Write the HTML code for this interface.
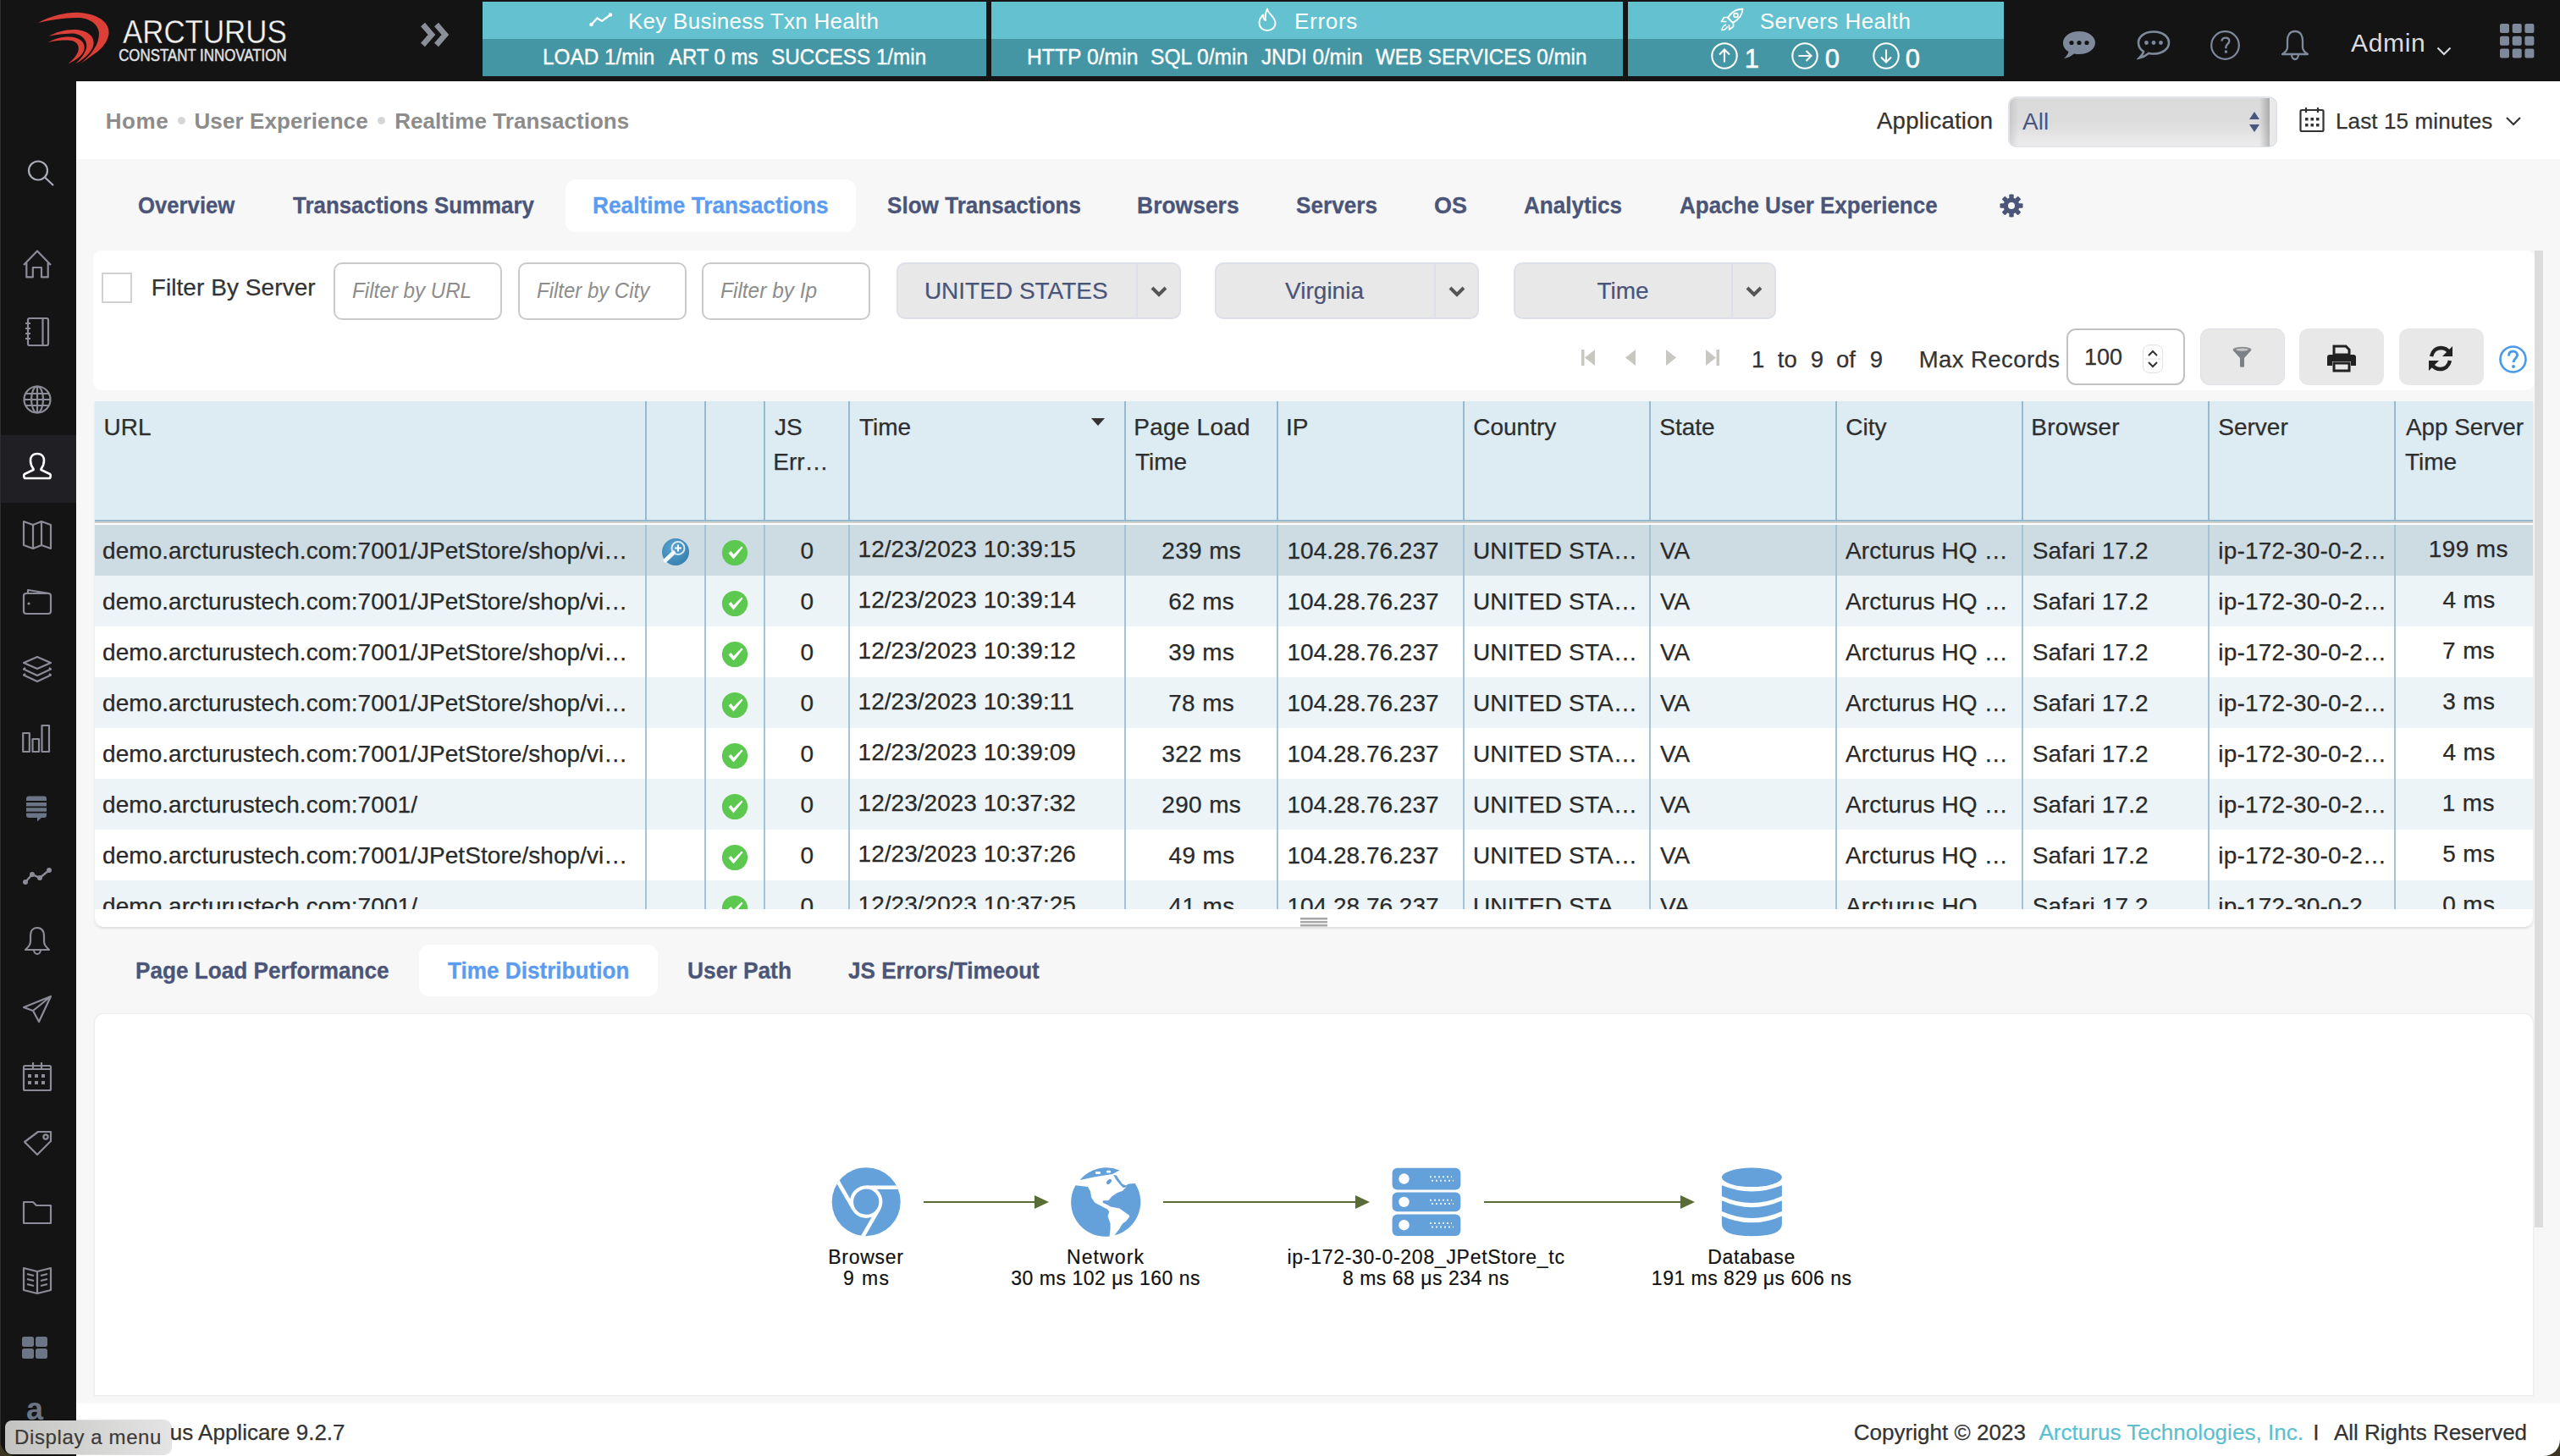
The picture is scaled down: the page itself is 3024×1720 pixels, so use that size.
<!DOCTYPE html><html><head><meta charset="utf-8"><style>
html,body{margin:0;padding:0;}
body{width:3024px;height:1720px;position:relative;overflow:hidden;background:#f7f7f7;font-family:"Liberation Sans", sans-serif;}
.t{position:absolute;white-space:nowrap;}
.r{position:absolute;}
</style></head><body>
<div class="r" style="left:0px;top:0px;width:3024px;height:96px;background:#141414"></div>
<div class="r" style="left:0px;top:96px;width:90px;height:1624px;background:#141414"></div>
<div class="r" style="left:0px;top:0px;width:1px;height:1720px;background:#2e2e2e"></div>
<div class="r" style="left:90px;top:96px;width:2934px;height:92px;background:#ffffff"></div>
<div class="r" style="left:90px;top:1658px;width:2934px;height:62px;background:#ffffff"></div>
<svg class="r" style="left:0px;top:0px;" width="140" height="90" viewBox="0 0 140 90">
<path d="M45 27 C 62 18, 80 14, 95 15 C 118 17, 130 28, 128.5 40 C 127 50, 120 58, 111 64 C 105 68, 100 72, 95 75 C 101 70, 107 65, 111 58 C 115 52, 117 46, 117 39 C 116 28, 105 20.5, 90 21 C 75 21.5, 60 23, 45 27 Z" fill="#dc3f38"/>
<path d="M57 43 C 66 38, 76 35, 87 35 C 102 35, 111 42, 110.7 51 C 110 60, 102 68, 89 75.5 C 96 69, 101.5 62, 102.3 55 C 102.8 46, 95 39.5, 85 39.5 C 74 40, 64 41, 57 43 Z" fill="#dc3f38"/>
<path d="M57 50 C 64 46, 72 43.5, 81 43.5 C 93 43.5, 100 49, 99.7 56.5 C 99.5 64, 92 70, 80.4 75.4 C 87 70, 92.5 64, 92.8 57.5 C 93 50.5, 87 47.5, 80 47.5 C 72 47.5, 64 48, 57 50 Z" fill="#dc3f38"/>
</svg>
<div class="t" style="left:145.00px;top:18.54px;font-size:38px;line-height:38px;color:#f2f2f2;font-weight:normal;font-style:normal;letter-spacing:0.000px;transform:scaleX(0.9176);transform-origin:0.00px 0;-webkit-text-stroke:0.35px #141414;">ARCTURUS</div>
<div class="t" style="left:140.00px;top:55.71px;font-size:19.5px;line-height:19.5px;color:#e2e2e2;font-weight:normal;font-style:normal;letter-spacing:0.000px;-webkit-text-stroke:0.45px #e2e2e2;transform:scaleX(0.8653);transform-origin:1.00px 0;">CONSTANT INNOVATION</div>
<svg class="r" style="left:496px;top:26px;" width="38" height="30" viewBox="0 0 38 30"><path d="M3.5 3 L14 15 L3.5 27" stroke="#8a8f9a" stroke-width="6.5" fill="none"/><path d="M19.5 3 L30 15 L19.5 27" stroke="#8a8f9a" stroke-width="6.5" fill="none"/></svg>
<div class="r" style="left:570px;top:2px;width:595px;height:44px;background:#63c1d0"></div>
<div class="r" style="left:570px;top:46px;width:595px;height:44px;background:#4596a4"></div>
<div class="r" style="left:1171px;top:2px;width:746px;height:44px;background:#63c1d0"></div>
<div class="r" style="left:1171px;top:46px;width:746px;height:44px;background:#4596a4"></div>
<div class="r" style="left:1923px;top:2px;width:444px;height:44px;background:#63c1d0"></div>
<div class="r" style="left:1923px;top:46px;width:444px;height:44px;background:#4596a4"></div>
<div class="t" style="left:742.00px;top:12.45px;font-size:26px;line-height:26px;color:#ffffff;font-weight:normal;font-style:normal;letter-spacing:0.273px;">Key Business Txn Health</div>
<div class="t" style="left:1529.00px;top:12.45px;font-size:26px;line-height:26px;color:#ffffff;font-weight:normal;font-style:normal;letter-spacing:0.700px;">Errors</div>
<div class="t" style="left:2078.75px;top:12.45px;font-size:26px;line-height:26px;color:#ffffff;font-weight:normal;font-style:normal;letter-spacing:0.481px;">Servers Health</div>
<div class="t" style="left:640.50px;top:55.06px;font-size:25px;line-height:25px;color:#ffffff;font-weight:normal;font-style:normal;letter-spacing:0.000px;-webkit-text-stroke:0.35px #ffffff;transform:scaleX(0.9716);transform-origin:2.00px 0;">LOAD 1/min</div>
<div class="t" style="left:789.50px;top:55.06px;font-size:25px;line-height:25px;color:#ffffff;font-weight:normal;font-style:normal;letter-spacing:0.000px;-webkit-text-stroke:0.35px #ffffff;transform:scaleX(0.9565);transform-origin:0.00px 0;">ART 0 ms</div>
<div class="t" style="left:911.25px;top:55.06px;font-size:25px;line-height:25px;color:#ffffff;font-weight:normal;font-style:normal;letter-spacing:0.000px;-webkit-text-stroke:0.35px #ffffff;transform:scaleX(0.9690);transform-origin:1.25px 0;">SUCCESS 1/min</div>
<div class="t" style="left:1213.00px;top:55.06px;font-size:25px;line-height:25px;color:#ffffff;font-weight:normal;font-style:normal;letter-spacing:0.000px;-webkit-text-stroke:0.35px #ffffff;transform:scaleX(0.9884);transform-origin:2.00px 0;">HTTP 0/min</div>
<div class="t" style="left:1358.75px;top:55.06px;font-size:25px;line-height:25px;color:#ffffff;font-weight:normal;font-style:normal;letter-spacing:0.000px;-webkit-text-stroke:0.35px #ffffff;transform:scaleX(0.9825);transform-origin:1.25px 0;">SQL 0/min</div>
<div class="t" style="left:1489.75px;top:55.06px;font-size:25px;line-height:25px;color:#ffffff;font-weight:normal;font-style:normal;letter-spacing:0.000px;-webkit-text-stroke:0.35px #ffffff;transform:scaleX(0.9671);transform-origin:0.25px 0;">JNDI 0/min</div>
<div class="t" style="left:1625.00px;top:55.06px;font-size:25px;line-height:25px;color:#ffffff;font-weight:normal;font-style:normal;letter-spacing:0.000px;-webkit-text-stroke:0.35px #ffffff;transform:scaleX(0.9668);transform-origin:0.00px 0;">WEB SERVICES 0/min</div>
<svg class="r" style="left:694px;top:13px" width="32" height="20" viewBox="0 0 32 20"><path d="M4.5 16 L11.5 8.5 L17 12 L27 4.5" stroke="#fff" stroke-width="2.2" fill="none"/><circle cx="4.5" cy="16" r="2.3" fill="#fff"/><circle cx="27" cy="4.5" r="2.3" fill="#fff"/></svg>
<svg class="r" style="left:1483px;top:8px" width="28" height="30" viewBox="0 0 28 30"><path d="M14 2.5 C 14.5 8, 23.5 12, 23.5 19 C 23.5 24.5, 19.5 28, 14 28 C 8.5 28, 4.5 24.5, 4.5 19 C 4.5 15, 6.5 12, 9 9.5 C 9 13.5, 10.5 15.5, 12 16 C 11 10, 12.5 5.5, 14 2.5 Z" stroke="#fff" stroke-width="1.9" fill="none" stroke-linejoin="round"/></svg>
<svg class="r" style="left:2031px;top:8px" width="30" height="30" viewBox="0 0 30 30"><path d="M27.5 2.5 C 20 2.5, 14 6.5, 10 13 L 16 19 C 22.5 15, 27.5 9, 27.5 2.5 Z" stroke="#fff" stroke-width="1.9" fill="none" stroke-linejoin="round"/><circle cx="19.5" cy="10" r="2.4" stroke="#fff" stroke-width="1.7" fill="none"/><path d="M10.5 12.5 L5.5 12.5 L2.5 17.5 L8.5 17.5 M16.5 18.5 L16.5 23.5 L11.5 27 L11.5 21" stroke="#fff" stroke-width="1.7" fill="none" stroke-linejoin="round"/><path d="M8 21 C 5 22, 3 25, 3 27.5 C 5.5 27.5, 8.5 26, 9.5 23" stroke="#fff" stroke-width="1.6" fill="none"/></svg>
<svg class="r" style="left:2020.5px;top:50px;" width="32" height="32" viewBox="0 0 32 32"><circle cx="16" cy="16" r="14.7" stroke="#fff" stroke-width="2.1" fill="none"/><path d="M16 23.5 L16 8.5 M10 14.5 L16 8.5 L22 14.5" stroke="#fff" stroke-width="2.1" fill="none"/></svg>
<svg class="r" style="left:2115.5px;top:50px;" width="32" height="32" viewBox="0 0 32 32"><circle cx="16" cy="16" r="14.7" stroke="#fff" stroke-width="2.1" fill="none"/><path d="M8.5 16 L23.5 16 M17.5 10 L23.5 16 L17.5 22" stroke="#fff" stroke-width="2.1" fill="none"/></svg>
<svg class="r" style="left:2211.5px;top:50px;" width="32" height="32" viewBox="0 0 32 32"><circle cx="16" cy="16" r="14.7" stroke="#fff" stroke-width="2.1" fill="none"/><path d="M16 8.5 L16 23.5 M10 17.5 L16 23.5 L22 17.5" stroke="#fff" stroke-width="2.1" fill="none"/></svg>
<div class="t" style="left:2060.75px;top:53.86px;font-size:31px;line-height:31px;color:#ffffff;font-weight:normal;font-style:normal;letter-spacing:0.000px;-webkit-text-stroke:0.5px #ffffff;">1</div>
<div class="t" style="left:2155.75px;top:53.86px;font-size:31px;line-height:31px;color:#ffffff;font-weight:normal;font-style:normal;letter-spacing:0.000px;-webkit-text-stroke:0.5px #ffffff;">0</div>
<div class="t" style="left:2250.75px;top:53.86px;font-size:31px;line-height:31px;color:#ffffff;font-weight:normal;font-style:normal;letter-spacing:0.000px;-webkit-text-stroke:0.5px #ffffff;">0</div>
<svg class="r" style="left:2436px;top:35px;" width="40" height="36" viewBox="0 0 40 36"><path d="M20 2 C 31 2, 39 8, 39 15.5 C 39 23, 31 29, 20 29 C 18 29, 16 28.8, 14 28.4 C 11 31, 7 33, 2 34 C 5 31, 7 29, 7.5 26 C 3 23.5, 1 20, 1 15.5 C 1 8, 9 2, 20 2 Z" fill="#7e899c"/><circle cx="11" cy="15.5" r="2.6" fill="#141414"/><circle cx="20" cy="15.5" r="2.6" fill="#141414"/><circle cx="29" cy="15.5" r="2.6" fill="#141414"/></svg>
<svg class="r" style="left:2524px;top:35px;" width="40" height="36" viewBox="0 0 40 36"><path d="M20 2.5 C 31 2.5, 38 8.5, 38 15.5 C 38 22.5, 31 28.5, 20 28.5 C 18 28.5, 16 28.3, 14 27.9 C 11 30.5, 7.5 32.5, 3 33.5 C 6 30.5, 7.5 28.5, 8 25.8 C 4 23.3, 2 19.8, 2 15.5 C 2 8.5, 9 2.5, 20 2.5 Z" fill="none" stroke="#7e899c" stroke-width="2.6"/><circle cx="11.5" cy="15.5" r="2.4" fill="#7e899c"/><circle cx="20" cy="15.5" r="2.4" fill="#7e899c"/><circle cx="28.5" cy="15.5" r="2.4" fill="#7e899c"/></svg>
<svg class="r" style="left:2610px;top:35px;" width="37" height="37" viewBox="0 0 37 37"><circle cx="18.5" cy="18.5" r="16.3" fill="none" stroke="#7e899c" stroke-width="2.2"/><path d="M14.5 13.6 C 14.5 11, 16.5 9.6, 19 9.6 C 21.7 9.6, 23.3 11.3, 23.3 13.4 C 23.3 16.5, 19.4 17.3, 19.4 20.6 L 19.4 22.3" fill="none" stroke="#7e899c" stroke-width="2.4"/><rect x="17.9" y="24.6" width="3" height="3" fill="#7e899c"/></svg>
<svg class="r" style="left:2694px;top:35px;" width="34" height="37" viewBox="0 0 34 37"><path d="M17 2 C 10 2, 8 8, 8 13 L 8 21 C 8 24, 5 27, 2 29 L 32 29 C 29 27, 26 24, 26 21 L 26 13 C 26 8, 24 2, 17 2 Z" fill="none" stroke="#7e899c" stroke-width="2.3" stroke-linejoin="round"/><path d="M13 29 C 13 33, 15 35, 17 35 C 19 35, 21 33, 21 29" fill="none" stroke="#7e899c" stroke-width="2.3"/></svg>
<div class="t" style="left:2777.00px;top:36.48px;font-size:30px;line-height:30px;color:#d9dde2;font-weight:normal;font-style:normal;letter-spacing:0.688px;">Admin</div>
<svg class="r" style="left:2877px;top:53px;" width="20" height="14" viewBox="0 0 20 14"><path d="M2.5 3.5 L10 11 L17.5 3.5" fill="none" stroke="#d9dde2" stroke-width="2"/></svg>
<svg class="r" style="left:2953px;top:28px;" width="41" height="41" viewBox="0 0 41 41"><rect x="0.0" y="0.0" width="11" height="11" rx="2" fill="#7e899c"/><rect x="14.7" y="0.0" width="11" height="11" rx="2" fill="#7e899c"/><rect x="29.4" y="0.0" width="11" height="11" rx="2" fill="#7e899c"/><rect x="0.0" y="14.7" width="11" height="11" rx="2" fill="#7e899c"/><rect x="14.7" y="14.7" width="11" height="11" rx="2" fill="#7e899c"/><rect x="29.4" y="14.7" width="11" height="11" rx="2" fill="#7e899c"/><rect x="0.0" y="29.4" width="11" height="11" rx="2" fill="#7e899c"/><rect x="14.7" y="29.4" width="11" height="11" rx="2" fill="#7e899c"/><rect x="29.4" y="29.4" width="11" height="11" rx="2" fill="#7e899c"/></svg>
<div class="r" style="left:1px;top:514px;width:89px;height:80px;background:#1f1f24"></div>
<svg class="r" style="left:30px;top:187px;" width="36" height="36" viewBox="0 0 36 36"><circle cx="15" cy="14.5" r="11" stroke="#a9adb8" stroke-width="2.2" fill="none" stroke-linejoin="round"/><path d="M23 22.5 L33 32" stroke="#a9adb8" stroke-width="2.2" fill="none" stroke-linejoin="round"/></svg>
<svg class="r" style="left:24.0px;top:292.0px;" width="40" height="40" viewBox="0 0 40 40"><path d="M4 21 L20 4.5 L36 21 M7.3 18 L7.3 35.4 L14.8 35.4 L14.8 24 L25 24 L25 35.4 L32.7 35.4 L32.7 18" stroke="#8c8c98" stroke-width="2.2" fill="none" stroke-linejoin="round"/></svg>
<svg class="r" style="left:24.0px;top:372.0px;" width="40" height="40" viewBox="0 0 40 40"><rect x="9" y="4" width="24" height="32" rx="2" stroke="#8c8c98" stroke-width="2.2" fill="none" stroke-linejoin="round"/><path d="M26.5 4 L26.5 36 M6 10 L12 10 M6 16 L12 16 M6 22 L12 22 M6 28 L12 28" stroke="#8c8c98" stroke-width="2.2" fill="none" stroke-linejoin="round"/></svg>
<svg class="r" style="left:24.0px;top:452.0px;" width="40" height="40" viewBox="0 0 40 40"><circle cx="20" cy="20" r="15.5" stroke="#8c8c98" stroke-width="2.2" fill="none" stroke-linejoin="round"/><ellipse cx="20" cy="20" rx="7" ry="15.5" stroke="#8c8c98" stroke-width="2.2" fill="none" stroke-linejoin="round"/><path d="M20 4.5 L20 35.5 M4.5 20 L35.5 20 M6.5 13 L33.5 13 M6.5 27 L33.5 27" stroke="#8c8c98" stroke-width="2.2" fill="none" stroke-linejoin="round"/></svg>
<svg class="r" style="left:24.0px;top:532.0px;" width="40" height="40" viewBox="0 0 40 40"><path d="M20 4 C 14 4, 12 8, 12 12 C 12 17, 14 20, 15.5 22 L 15.5 23 L 5 28 C 4 29, 4 31, 5 33 L 35 33 C 36 31, 36 29, 35 28 L 24.5 23 L 24.5 22 C 26 20, 28 17, 28 12 C 28 8, 26 4, 20 4 Z" stroke="#ffffff" stroke-width="2.6" fill="none" stroke-linejoin="round"/></svg>
<svg class="r" style="left:24.0px;top:612.0px;" width="40" height="40" viewBox="0 0 40 40"><path d="M4 4 L15 8 L25 4 L36 8 L36 36 L25 32 L15 36 L4 32 Z M15 8 L15 36 M25 4 L25 32" stroke="#8c8c98" stroke-width="2.2" fill="none" stroke-linejoin="round"/></svg>
<svg class="r" style="left:24.0px;top:692.0px;" width="40" height="40" viewBox="0 0 40 40"><path d="M9 10 L9 5 L34 9" stroke="#8c8c98" stroke-width="2.2" fill="none" stroke-linejoin="round"/><rect x="4" y="9" width="32" height="24" rx="3" stroke="#8c8c98" stroke-width="2.2" fill="none" stroke-linejoin="round"/><circle cx="10" cy="21" r="1.6" fill="#8c8c98"/></svg>
<svg class="r" style="left:24.0px;top:772.0px;" width="40" height="40" viewBox="0 0 40 40"><path d="M4 11 L20 4 L36 11 L20 18 Z" stroke="#8c8c98" stroke-width="2.2" fill="none" stroke-linejoin="round"/><path d="M6 17 L4 18.5 L20 26 L36 18.5 L34 17" stroke="#8c8c98" stroke-width="2.2" fill="none" stroke-linejoin="round"/><path d="M6 24 L4 25.5 L20 33 L36 25.5 L34 24" stroke="#8c8c98" stroke-width="2.2" fill="none" stroke-linejoin="round"/></svg>
<svg class="r" style="left:24.0px;top:852.0px;" width="40" height="40" viewBox="0 0 40 40"><rect x="3.2" y="14" width="7.6" height="22" stroke="#8c8c98" stroke-width="2.2" fill="none" stroke-linejoin="round"/><rect x="14.5" y="21" width="7.5" height="15" stroke="#8c8c98" stroke-width="2.2" fill="none" stroke-linejoin="round"/><rect x="25.5" y="5" width="8.5" height="31" stroke="#8c8c98" stroke-width="2.2" fill="none" stroke-linejoin="round"/></svg>
<svg class="r" style="left:22.0px;top:932.0px;" width="40" height="40" viewBox="0 0 40 40"><path d="M12 8.5 L30 8.5 C 32 8.5, 33 9.5, 33 11.5 L 33 31 C 33 33, 32 34, 30 34 L 27 34 L 22 38.5 L 22 34 L 12 34 C 10 34, 9 33, 9 31 L 9 11.5 C 9 9.5, 10 8.5, 12 8.5 Z" fill="#6b7585"/><path d="M9 15 L33 15 M9 21.3 L33 21.3 M9 27.6 L33 27.6" stroke="#141414" stroke-width="1.8"/></svg>
<svg class="r" style="left:24.0px;top:1012.0px;" width="40" height="40" viewBox="0 0 40 40"><path d="M6 30 L14 21 L23 25 L34 16" stroke="#8c8c98" stroke-width="2.4" fill="none"/><circle cx="6" cy="30" r="3" fill="#8c8c98"/><circle cx="14" cy="21" r="3" fill="#8c8c98"/><circle cx="23" cy="25" r="3" fill="#8c8c98"/><circle cx="34" cy="16" r="3" fill="#8c8c98"/></svg>
<svg class="r" style="left:24.0px;top:1092.0px;" width="40" height="40" viewBox="0 0 40 40"><path d="M20 4 C 14 4, 12 9, 12 13 L 12 20 C 12 24, 10 26, 6 30 L 34 30 C 30 26, 28 24, 28 20 L 28 13 C 28 9, 26 4, 20 4 Z" stroke="#8c8c98" stroke-width="2.2" fill="none" stroke-linejoin="round"/><path d="M16 30 C 16 33, 18 35, 20 35 C 22 35, 24 33, 24 30" stroke="#8c8c98" stroke-width="2.2" fill="none" stroke-linejoin="round"/></svg>
<svg class="r" style="left:24.0px;top:1172.0px;" width="40" height="40" viewBox="0 0 40 40"><path d="M4 18 L36 5 L22 35 L15 22 Z M15 22 L36 5" stroke="#8c8c98" stroke-width="2.2" fill="none" stroke-linejoin="round"/></svg>
<svg class="r" style="left:24.0px;top:1252.0px;" width="40" height="40" viewBox="0 0 40 40"><rect x="4" y="7" width="32" height="29" rx="1.5" stroke="#8c8c98" stroke-width="2.2" fill="none" stroke-linejoin="round"/><path d="M15 3 L15 10 M25 3 L25 10 M4 11 L36 11" stroke="#8c8c98" stroke-width="2.2" fill="none" stroke-linejoin="round"/><rect x="9" y="17" width="4" height="4" fill="#8c8c98"/><rect x="9" y="25" width="4" height="4" fill="#8c8c98"/><rect x="17" y="17" width="4" height="4" fill="#8c8c98"/><rect x="17" y="25" width="4" height="4" fill="#8c8c98"/><rect x="25" y="17" width="4" height="4" fill="#8c8c98"/><rect x="25" y="25" width="4" height="4" fill="#8c8c98"/></svg>
<svg class="r" style="left:24.0px;top:1332.0px;" width="40" height="40" viewBox="0 0 40 40"><path d="M30 5 L36 5 L36 16 L20 32 L5 17 L21 5 Z" stroke="#8c8c98" stroke-width="2.2" fill="none" stroke-linejoin="round"/><circle cx="30" cy="11" r="2.6" stroke="#8c8c98" stroke-width="2.2" fill="none" stroke-linejoin="round"/></svg>
<svg class="r" style="left:24.0px;top:1412.0px;" width="40" height="40" viewBox="0 0 40 40"><path d="M4 8 L15 8 L19 12 L36 12 L36 33 L4 33 Z" stroke="#8c8c98" stroke-width="2.2" fill="none" stroke-linejoin="round"/></svg>
<svg class="r" style="left:24.0px;top:1492.0px;" width="40" height="40" viewBox="0 0 40 40"><path d="M4 6 L20 10 L36 6 L36 32 L20 36 L4 32 Z M20 10 L20 36 M8 13 L16 15 M8 19 L16 21 M8 25 L16 27 M24 15 L32 13 M24 21 L32 19 M24 27 L32 25" stroke="#8c8c98" stroke-width="2.2" fill="none" stroke-linejoin="round"/></svg>
<svg class="r" style="left:22.0px;top:1572.0px;" width="40" height="40" viewBox="0 0 40 40"><rect x="4" y="7" width="14" height="12" rx="2.5" fill="#6b7585"/><rect x="4" y="21" width="14" height="12" rx="2.5" fill="#6b7585"/><rect x="20" y="7" width="14" height="12" rx="2.5" fill="#6b7585"/><rect x="20" y="21" width="14" height="12" rx="2.5" fill="#6b7585"/></svg>
<div class="t" style="left:31.00px;top:1647.27px;font-size:36px;line-height:36px;color:#6b7585;font-weight:bold;font-style:normal;letter-spacing:0.000px;">a</div>
<div class="t" style="left:124.75px;top:129.94px;font-size:26px;line-height:26px;color:#8c8c8c;font-weight:bold;font-style:normal;letter-spacing:0.533px;">Home</div>
<div class="r" style="left:210px;top:138px;width:9px;height:9px;background:#d6d6d6;border-radius:50%"></div>
<div class="t" style="left:229.50px;top:129.94px;font-size:26px;line-height:26px;color:#8c8c8c;font-weight:bold;font-style:normal;letter-spacing:0.096px;">User Experience</div>
<div class="r" style="left:446px;top:138px;width:9px;height:9px;background:#d6d6d6;border-radius:50%"></div>
<div class="t" style="left:466.25px;top:129.94px;font-size:26px;line-height:26px;color:#8c8c8c;font-weight:bold;font-style:normal;letter-spacing:0.050px;">Realtime Transactions</div>
<div class="t" style="left:2217.00px;top:128.77px;font-size:27.5px;line-height:27.5px;color:#333;font-weight:normal;font-style:normal;letter-spacing:0.250px;-webkit-text-stroke:0.25px #333;">Application</div>
<div class="r" style="left:2372px;top:114px;width:318px;height:60px;border-radius:10px;background:#e9e9e9;box-shadow:inset 0 0 0 1.5px #dde1ea;"></div>
<div class="r" style="left:2373.5px;top:115.5px;width:307.5px;height:57px;border-radius:8px 0 0 8px;background:linear-gradient(90deg,rgba(0,0,0,0.09),rgba(0,0,0,0) 10px,rgba(0,0,0,0) calc(100% - 12px),rgba(0,0,0,0.22)),linear-gradient(#dadada,#dcdcdc 50%,#ececec)"></div>
<div class="t" style="left:2389.00px;top:129.71px;font-size:28px;line-height:28px;color:#4a5580;font-weight:normal;font-style:normal;letter-spacing:0.000px;">All</div>
<svg class="r" style="left:2654px;top:130px;" width="18" height="28" viewBox="0 0 18 28"><path d="M9 2 L15 11 L3 11 Z M9 26 L15 17 L3 17 Z" fill="#4a5580"/></svg>
<svg class="r" style="left:2715px;top:125px;" width="32" height="32" viewBox="0 0 32 32"><rect x="2.5" y="5" width="27" height="25" rx="1.5" fill="none" stroke="#333" stroke-width="2.2"/><path d="M9 2 L9 8 M23 2 L23 8" stroke="#333" stroke-width="2.2"/><rect x="8" y="14" width="3.5" height="3.5" fill="#333"/><rect x="8" y="21" width="3.5" height="3.5" fill="#333"/><rect x="14.5" y="14" width="3.5" height="3.5" fill="#333"/><rect x="14.5" y="21" width="3.5" height="3.5" fill="#333"/><rect x="21" y="14" width="3.5" height="3.5" fill="#333"/><rect x="21" y="21" width="3.5" height="3.5" fill="#333"/></svg>
<div class="t" style="left:2759.00px;top:130.44px;font-size:26px;line-height:26px;color:#333;font-weight:normal;font-style:normal;letter-spacing:0.125px;-webkit-text-stroke:0.25px #333;">Last 15 minutes</div>
<svg class="r" style="left:2958px;top:136px;" width="22" height="14" viewBox="0 0 22 14"><path d="M3 3 L11 11 L19 3" fill="none" stroke="#333" stroke-width="2.2"/></svg>
<div class="r" style="left:668px;top:212px;width:343px;height:62px;background:#fff;border-radius:12px"></div>
<div class="t" style="left:163.00px;top:230.33px;font-size:27px;line-height:27px;color:#4a5578;font-weight:bold;font-style:normal;letter-spacing:0.000px;-webkit-text-stroke:0.3px #4a5578;transform:scaleX(0.9516);transform-origin:1.00px 0;">Overview</div>
<div class="t" style="left:346.35px;top:230.33px;font-size:27px;line-height:27px;color:#4a5578;font-weight:bold;font-style:normal;letter-spacing:0.000px;-webkit-text-stroke:0.3px #4a5578;transform:scaleX(0.9592);transform-origin:0.25px 0;">Transactions Summary</div>
<div class="t" style="left:1048.25px;top:230.33px;font-size:27px;line-height:27px;color:#4a5578;font-weight:bold;font-style:normal;letter-spacing:0.000px;-webkit-text-stroke:0.3px #4a5578;transform:scaleX(0.9660);transform-origin:0.75px 0;">Slow Transactions</div>
<div class="t" style="left:1343.25px;top:230.33px;font-size:27px;line-height:27px;color:#4a5578;font-weight:bold;font-style:normal;letter-spacing:0.000px;-webkit-text-stroke:0.3px #4a5578;transform:scaleX(0.9800);transform-origin:1.75px 0;">Browsers</div>
<div class="t" style="left:1531.25px;top:230.33px;font-size:27px;line-height:27px;color:#4a5578;font-weight:bold;font-style:normal;letter-spacing:0.000px;-webkit-text-stroke:0.3px #4a5578;transform:scaleX(0.9691);transform-origin:0.75px 0;">Servers</div>
<div class="t" style="left:1694.00px;top:230.33px;font-size:27px;line-height:27px;color:#4a5578;font-weight:bold;font-style:normal;letter-spacing:0.000px;-webkit-text-stroke:0.3px #4a5578;transform:scaleX(0.9986);transform-origin:1.00px 0;">OS</div>
<div class="t" style="left:1800.25px;top:230.33px;font-size:27px;line-height:27px;color:#4a5578;font-weight:bold;font-style:normal;letter-spacing:0.000px;-webkit-text-stroke:0.3px #4a5578;transform:scaleX(0.9661);transform-origin:0.75px 0;">Analytics</div>
<div class="t" style="left:1984.25px;top:230.33px;font-size:27px;line-height:27px;color:#4a5578;font-weight:bold;font-style:normal;letter-spacing:0.000px;-webkit-text-stroke:0.3px #4a5578;transform:scaleX(0.9619);transform-origin:0.75px 0;">Apache User Experience</div>
<div class="t" style="left:700.25px;top:230.33px;font-size:27px;line-height:27px;color:#5b9cf0;font-weight:bold;font-style:normal;letter-spacing:0.000px;-webkit-text-stroke:0.3px #5b9cf0;transform:scaleX(0.9718);transform-origin:1.75px 0;">Realtime Transactions</div>
<svg class="r" style="left:2362px;top:229px;" width="28" height="28" viewBox="0 0 28 28"><rect x="11.3" y="0.5" width="5.4" height="7" rx="1" fill="#4a5578" transform="rotate(0 14 14)"/><rect x="11.3" y="0.5" width="5.4" height="7" rx="1" fill="#4a5578" transform="rotate(45 14 14)"/><rect x="11.3" y="0.5" width="5.4" height="7" rx="1" fill="#4a5578" transform="rotate(90 14 14)"/><rect x="11.3" y="0.5" width="5.4" height="7" rx="1" fill="#4a5578" transform="rotate(135 14 14)"/><rect x="11.3" y="0.5" width="5.4" height="7" rx="1" fill="#4a5578" transform="rotate(180 14 14)"/><rect x="11.3" y="0.5" width="5.4" height="7" rx="1" fill="#4a5578" transform="rotate(225 14 14)"/><rect x="11.3" y="0.5" width="5.4" height="7" rx="1" fill="#4a5578" transform="rotate(270 14 14)"/><rect x="11.3" y="0.5" width="5.4" height="7" rx="1" fill="#4a5578" transform="rotate(315 14 14)"/><circle cx="14" cy="14" r="9.5" fill="#4a5578"/><circle cx="14" cy="14" r="4" fill="#f7f7f7"/></svg>
<div class="r" style="left:110px;top:296px;width:2884px;height:165px;background:#fff;border-radius:10px"></div>
<div class="r" style="left:2994px;top:296px;width:10px;height:1154px;background:#dcdcdc"></div>
<div class="r" style="left:120px;top:322px;width:36px;height:36px;box-sizing:border-box;border:2px solid #d2d2d2;background:#fff"></div>
<div class="t" style="left:178.75px;top:326.21px;font-size:28px;line-height:28px;color:#333;font-weight:normal;font-style:normal;letter-spacing:0.067px;-webkit-text-stroke:0.25px #333;">Filter By Server</div>
<div class="r" style="left:394px;top:310px;width:199px;height:68px;box-sizing:border-box;border:2px solid #cacaca;border-radius:10px;background:#fff"></div>
<div class="t" style="left:415.75px;top:331.06px;font-size:25px;line-height:25px;color:#8d8d8d;font-weight:normal;font-style:italic;letter-spacing:0.000px;transform:scaleX(0.9668);transform-origin:0.75px 0;">Filter by URL</div>
<div class="r" style="left:612px;top:310px;width:199px;height:68px;box-sizing:border-box;border:2px solid #cacaca;border-radius:10px;background:#fff"></div>
<div class="t" style="left:633.75px;top:331.06px;font-size:25px;line-height:25px;color:#8d8d8d;font-weight:normal;font-style:italic;letter-spacing:0.000px;transform:scaleX(0.9580);transform-origin:0.75px 0;">Filter by City</div>
<div class="r" style="left:829px;top:310px;width:199px;height:68px;box-sizing:border-box;border:2px solid #cacaca;border-radius:10px;background:#fff"></div>
<div class="t" style="left:850.75px;top:331.06px;font-size:25px;line-height:25px;color:#8d8d8d;font-weight:normal;font-style:italic;letter-spacing:0.000px;transform:scaleX(0.9783);transform-origin:0.75px 0;">Filter by Ip</div>
<div class="r" style="left:1059px;top:310px;width:336px;height:67px;box-sizing:border-box;border:2px solid #dde0e8;border-radius:10px;background:#e8e8e8"></div>
<div class="r" style="left:1342px;top:312px;width:2px;height:63px;background:#dde0e8"></div>
<div class="t" style="left:1091.88px;top:330.21px;font-size:28px;line-height:28px;color:#4a5478;font-weight:normal;font-style:normal;letter-spacing:0.000px;-webkit-text-stroke:0.2px #4a5478;">UNITED STATES</div>
<svg class="r" style="left:1358px;top:336px;" width="22" height="17" viewBox="0 0 22 17"><path d="M3 4 L11 12 L19 4" fill="none" stroke="#555" stroke-width="4"/></svg>
<div class="r" style="left:1435px;top:310px;width:312px;height:67px;box-sizing:border-box;border:2px solid #dde0e8;border-radius:10px;background:#e8e8e8"></div>
<div class="r" style="left:1694px;top:312px;width:2px;height:63px;background:#dde0e8"></div>
<div class="t" style="left:1518.12px;top:330.21px;font-size:28px;line-height:28px;color:#4a5478;font-weight:normal;font-style:normal;letter-spacing:0.000px;-webkit-text-stroke:0.2px #4a5478;">Virginia</div>
<svg class="r" style="left:1710px;top:336px;" width="22" height="17" viewBox="0 0 22 17"><path d="M3 4 L11 12 L19 4" fill="none" stroke="#555" stroke-width="4"/></svg>
<div class="r" style="left:1788px;top:310px;width:310px;height:67px;box-sizing:border-box;border:2px solid #dde0e8;border-radius:10px;background:#e8e8e8"></div>
<div class="r" style="left:2045px;top:312px;width:2px;height:63px;background:#dde0e8"></div>
<div class="t" style="left:1886.38px;top:330.21px;font-size:28px;line-height:28px;color:#4a5478;font-weight:normal;font-style:normal;letter-spacing:0.000px;-webkit-text-stroke:0.2px #4a5478;">Time</div>
<svg class="r" style="left:2061px;top:336px;" width="22" height="17" viewBox="0 0 22 17"><path d="M3 4 L11 12 L19 4" fill="none" stroke="#555" stroke-width="4"/></svg>
<svg class="r" style="left:1866px;top:412px;" width="20" height="21" viewBox="0 0 20 21"><rect x="2" y="1" width="3.5" height="19" fill="#c9c7c1"/><path d="M18 1 L6 10.5 L18 20 Z" fill="#c9c7c1"/></svg>
<svg class="r" style="left:1917px;top:412px;" width="18" height="21" viewBox="0 0 18 21"><path d="M15 1 L3 10.5 L15 20 Z" fill="#c9c7c1"/></svg>
<svg class="r" style="left:1965px;top:412px;" width="18" height="21" viewBox="0 0 18 21"><path d="M3 1 L15 10.5 L3 20 Z" fill="#c9c7c1"/></svg>
<svg class="r" style="left:2013px;top:412px;" width="20" height="21" viewBox="0 0 20 21"><rect x="14.5" y="1" width="3.5" height="19" fill="#c9c7c1"/><path d="M2 1 L14 10.5 L2 20 Z" fill="#c9c7c1"/></svg>
<div class="t" style="left:2069.00px;top:410.77px;font-size:27.5px;line-height:27.5px;color:#333;font-weight:normal;font-style:normal;letter-spacing:0.000px;-webkit-text-stroke:0.25px #333;">1</div>
<div class="t" style="left:2099.75px;top:410.77px;font-size:27.5px;line-height:27.5px;color:#333;font-weight:normal;font-style:normal;letter-spacing:0.000px;-webkit-text-stroke:0.25px #333;">to</div>
<div class="t" style="left:2138.75px;top:410.77px;font-size:27.5px;line-height:27.5px;color:#333;font-weight:normal;font-style:normal;letter-spacing:0.000px;-webkit-text-stroke:0.25px #333;">9</div>
<div class="t" style="left:2169.00px;top:410.77px;font-size:27.5px;line-height:27.5px;color:#333;font-weight:normal;font-style:normal;letter-spacing:0.000px;-webkit-text-stroke:0.25px #333;">of</div>
<div class="t" style="left:2208.75px;top:410.77px;font-size:27.5px;line-height:27.5px;color:#333;font-weight:normal;font-style:normal;letter-spacing:0.000px;-webkit-text-stroke:0.25px #333;">9</div>
<div class="t" style="left:2266.75px;top:410.77px;font-size:27.5px;line-height:27.5px;color:#333;font-weight:normal;font-style:normal;letter-spacing:0.420px;-webkit-text-stroke:0.25px #333;">Max Records</div>
<div class="r" style="left:2441px;top:388px;width:140px;height:67px;box-sizing:border-box;border:2px solid #c2c2c2;border-radius:11px;background:#fff"></div>
<div class="t" style="left:2462.00px;top:409.33px;font-size:27px;line-height:27px;color:#333;font-weight:normal;font-style:normal;letter-spacing:0.000px;-webkit-text-stroke:0.25px #333;">100</div>
<div class="r" style="left:2531px;top:407px;width:24px;height:34px;box-sizing:border-box;border:1px solid #e2e2e2;border-radius:8px;background:#fff"></div>
<svg class="r" style="left:2531px;top:407px;" width="24" height="34" viewBox="0 0 24 34"><path d="M7 13 L12 8 L17 13 M7 21 L12 26 L17 21" fill="none" stroke="#333" stroke-width="2"/><path d="M2 17 L22 17" stroke="#e4e4e4" stroke-width="1"/></svg>
<div class="r" style="left:2599px;top:388px;width:100px;height:67px;border-radius:11px;background:#e8e8e8;box-sizing:border-box;border:1px solid #dde0e8"></div>
<div class="r" style="left:2716px;top:388px;width:100px;height:67px;border-radius:11px;background:#e8e8e8"></div>
<div class="r" style="left:2834px;top:388px;width:100px;height:67px;border-radius:11px;background:#e8e8e8"></div>
<svg class="r" style="left:2635px;top:409px;" width="27" height="26" viewBox="0 0 27 26"><ellipse cx="13.5" cy="4" rx="11" ry="3.3" fill="#8a8d91"/><path d="M2.5 4.5 L11 14 L11 24 C 11 25, 16 25, 16 24 L16 14 L24.5 4.5 Z" fill="#7d8084"/><ellipse cx="13.5" cy="4.2" rx="7" ry="1.6" fill="#c8c8c8"/></svg>
<svg class="r" style="left:2748px;top:407px;" width="36" height="33" viewBox="0 0 36 33"><path d="M9 2 L23 2 L27 6 L27 12 L9 12 Z" fill="none" stroke="#222" stroke-width="3"/><path d="M4 12 L32 12 C 34 12, 35 13, 35 15 L35 25 L29 25 L29 20 L7 20 L7 25 L1 25 L1 15 C 1 13, 2 12, 4 12 Z" fill="#222"/><rect x="9" y="22" width="18" height="9" fill="none" stroke="#222" stroke-width="3"/></svg>
<svg class="r" style="left:2866px;top:407px;" width="34" height="33" viewBox="0 0 34 33"><path d="M6 14 C 7.5 7.5, 12 4, 17.5 4 C 22 4, 25 6, 27 9" fill="none" stroke="#222" stroke-width="4.5"/><path d="M31 2 L31 14 L19 14 Z" fill="#222"/><path d="M28 19 C 26.5 25.5, 22 29, 16.5 29 C 12 29, 9 27, 7 24" fill="none" stroke="#222" stroke-width="4.5"/><path d="M3 31 L3 19 L15 19 Z" fill="#222"/></svg>
<svg class="r" style="left:2951px;top:407px;" width="35" height="35" viewBox="0 0 35 35"><circle cx="17.5" cy="17.5" r="15" fill="none" stroke="#4a9ae8" stroke-width="2.6"/><path d="M12.5 13.5 C 12.5 9.5, 15 8, 17.5 8 C 20.5 8, 22.5 10, 22.5 12.5 C 22.5 16, 18 17, 18 21" fill="none" stroke="#4a9ae8" stroke-width="3"/><circle cx="18" cy="26" r="2" fill="#4a9ae8"/></svg>
<div class="r" style="left:112px;top:474px;width:2880px;height:621px;background:#fff;border-radius:0 0 10px 10px;box-shadow:0 2px 3px rgba(0,0,0,0.10)"></div>
<div class="r" style="left:112px;top:474px;width:2880px;height:140px;background:#ddebf2"></div>
<div class="r" style="left:112px;top:614px;width:2880px;height:2px;background:#96bad0"></div>
<div class="r" style="left:112px;top:616px;width:2880px;height:1.5px;background:#d2ceca"></div>
<div class="t" style="left:122.50px;top:490.71px;font-size:28px;line-height:28px;color:#2e2e2e;font-weight:normal;font-style:normal;letter-spacing:0.000px;-webkit-text-stroke:0.25px #2e2e2e;">URL</div>
<div class="t" style="left:915.00px;top:490.71px;font-size:28px;line-height:28px;color:#2e2e2e;font-weight:normal;font-style:normal;letter-spacing:0.000px;-webkit-text-stroke:0.25px #2e2e2e;">JS</div>
<div class="t" style="left:913.25px;top:531.71px;font-size:28px;line-height:28px;color:#2e2e2e;font-weight:normal;font-style:normal;letter-spacing:0.000px;-webkit-text-stroke:0.25px #2e2e2e;">Err…</div>
<div class="t" style="left:1015.00px;top:490.71px;font-size:28px;line-height:28px;color:#2e2e2e;font-weight:normal;font-style:normal;letter-spacing:0.000px;-webkit-text-stroke:0.25px #2e2e2e;">Time</div>
<div class="t" style="left:1339.25px;top:490.71px;font-size:28px;line-height:28px;color:#2e2e2e;font-weight:normal;font-style:normal;letter-spacing:0.231px;-webkit-text-stroke:0.25px #2e2e2e;">Page Load</div>
<div class="t" style="left:1341.00px;top:531.71px;font-size:28px;line-height:28px;color:#2e2e2e;font-weight:normal;font-style:normal;letter-spacing:0.000px;-webkit-text-stroke:0.25px #2e2e2e;">Time</div>
<div class="t" style="left:1519.00px;top:490.71px;font-size:28px;line-height:28px;color:#2e2e2e;font-weight:normal;font-style:normal;letter-spacing:0.000px;-webkit-text-stroke:0.25px #2e2e2e;">IP</div>
<div class="t" style="left:1740.25px;top:490.71px;font-size:28px;line-height:28px;color:#2e2e2e;font-weight:normal;font-style:normal;letter-spacing:0.000px;-webkit-text-stroke:0.25px #2e2e2e;">Country</div>
<div class="t" style="left:1960.25px;top:490.71px;font-size:28px;line-height:28px;color:#2e2e2e;font-weight:normal;font-style:normal;letter-spacing:0.000px;-webkit-text-stroke:0.25px #2e2e2e;">State</div>
<div class="t" style="left:2180.25px;top:490.71px;font-size:28px;line-height:28px;color:#2e2e2e;font-weight:normal;font-style:normal;letter-spacing:0.000px;-webkit-text-stroke:0.25px #2e2e2e;">City</div>
<div class="t" style="left:2399.25px;top:490.71px;font-size:28px;line-height:28px;color:#2e2e2e;font-weight:normal;font-style:normal;letter-spacing:0.292px;-webkit-text-stroke:0.25px #2e2e2e;">Browser</div>
<div class="t" style="left:2620.25px;top:490.71px;font-size:28px;line-height:28px;color:#2e2e2e;font-weight:normal;font-style:normal;letter-spacing:0.000px;-webkit-text-stroke:0.25px #2e2e2e;">Server</div>
<div class="t" style="left:2841.50px;top:490.71px;font-size:28px;line-height:28px;color:#2e2e2e;font-weight:normal;font-style:normal;letter-spacing:0.000px;-webkit-text-stroke:0.25px #2e2e2e;transform:scaleX(0.9928);transform-origin:0.00px 0;">App Server</div>
<div class="t" style="left:2841.00px;top:531.71px;font-size:28px;line-height:28px;color:#2e2e2e;font-weight:normal;font-style:normal;letter-spacing:0.000px;-webkit-text-stroke:0.25px #2e2e2e;">Time</div>
<svg class="r" style="left:1287px;top:492px;" width="20" height="13" viewBox="0 0 20 13"><path d="M2 2 L18 2 L10 11 Z" fill="#333"/></svg>
<div class="r" style="left:112px;top:620px;width:2880px;height:454px;overflow:hidden">
<div class="r" style="left:0px;top:0px;width:2880px;height:60px;background:#cddce2"></div>
<div class="t" style="left:9.00px;top:16.71px;font-size:28px;line-height:28px;color:#2a2a2a;font-weight:normal;font-style:normal;letter-spacing:0.057px;-webkit-text-stroke:0.25px #2a2a2a;">demo.arcturustech.com:7001/JPetStore/shop/vi…</div>
<svg class="r" style="left:669px;top:15px;" width="34" height="34" viewBox="0 0 34 34"><defs><radialGradient id="mg" cx="40%" cy="35%" r="65%"><stop offset="0" stop-color="#5aa3cf"/><stop offset="1" stop-color="#3a82b0"/></radialGradient></defs><circle cx="17" cy="17" r="16" fill="url(#mg)"/><circle cx="20" cy="12.5" r="7.5" fill="none" stroke="#d8eaf5" stroke-width="2"/><path d="M20 8.5 L20 16.5 M16 12.5 L24 12.5" stroke="#fff" stroke-width="2.2"/><path d="M14.5 18 L5 27" stroke="#f4f8fb" stroke-width="5" stroke-linecap="round"/></svg>
<svg class="r" style="left:740px;top:17px;" width="32" height="32" viewBox="0 0 32 32"><circle cx="16" cy="16" r="15.1" fill="#5cc850"/><path d="M8.5 16.5 L11.5 14 L14.5 18 L24 8.5 L25.5 10 L14.5 23.5 Z" fill="#fff"/></svg>
<div class="t" style="left:833.38px;top:16.71px;font-size:28px;line-height:28px;color:#2a2a2a;font-weight:normal;font-style:normal;letter-spacing:0.000px;-webkit-text-stroke:0.25px #2a2a2a;">0</div>
<div class="t" style="left:901.60px;top:15.21px;font-size:28px;line-height:28px;color:#2a2a2a;font-weight:normal;font-style:normal;letter-spacing:0.022px;-webkit-text-stroke:0.25px #2a2a2a;">12/23/2023 10:39:15</div>
<div class="t" style="left:1260.23px;top:16.71px;font-size:28px;line-height:28px;color:#2a2a2a;font-weight:normal;font-style:normal;letter-spacing:0.357px;-webkit-text-stroke:0.25px #2a2a2a;">239 ms</div>
<div class="t" style="left:1408.50px;top:16.71px;font-size:28px;line-height:28px;color:#2a2a2a;font-weight:normal;font-style:normal;letter-spacing:0.000px;-webkit-text-stroke:0.25px #2a2a2a;">104.28.76.237</div>
<div class="t" style="left:1628.00px;top:16.71px;font-size:28px;line-height:28px;color:#2a2a2a;font-weight:normal;font-style:normal;letter-spacing:0.150px;-webkit-text-stroke:0.25px #2a2a2a;">UNITED STA…</div>
<div class="t" style="left:1849.00px;top:16.71px;font-size:28px;line-height:28px;color:#2a2a2a;font-weight:normal;font-style:normal;letter-spacing:0.000px;-webkit-text-stroke:0.25px #2a2a2a;">VA</div>
<div class="t" style="left:2068.00px;top:16.71px;font-size:28px;line-height:28px;color:#2a2a2a;font-weight:normal;font-style:normal;letter-spacing:0.162px;-webkit-text-stroke:0.25px #2a2a2a;">Arcturus HQ …</div>
<div class="t" style="left:2288.75px;top:16.71px;font-size:28px;line-height:28px;color:#2a2a2a;font-weight:normal;font-style:normal;letter-spacing:0.150px;-webkit-text-stroke:0.25px #2a2a2a;">Safari 17.2</div>
<div class="t" style="left:2508.25px;top:16.71px;font-size:28px;line-height:28px;color:#2a2a2a;font-weight:normal;font-style:normal;letter-spacing:0.212px;-webkit-text-stroke:0.25px #2a2a2a;">ip-172-30-0-2…</div>
<div class="t" style="left:2756.86px;top:15.21px;font-size:28px;line-height:28px;color:#2a2a2a;font-weight:normal;font-style:normal;letter-spacing:0.354px;-webkit-text-stroke:0.25px #2a2a2a;">199 ms</div>
<div class="r" style="left:0px;top:60px;width:2880px;height:60px;background:#ecf4f7"></div>
<div class="t" style="left:9.00px;top:76.71px;font-size:28px;line-height:28px;color:#2a2a2a;font-weight:normal;font-style:normal;letter-spacing:0.057px;-webkit-text-stroke:0.25px #2a2a2a;">demo.arcturustech.com:7001/JPetStore/shop/vi…</div>
<svg class="r" style="left:740px;top:77px;" width="32" height="32" viewBox="0 0 32 32"><circle cx="16" cy="16" r="15.1" fill="#5cc850"/><path d="M8.5 16.5 L11.5 14 L14.5 18 L24 8.5 L25.5 10 L14.5 23.5 Z" fill="#fff"/></svg>
<div class="t" style="left:833.38px;top:76.71px;font-size:28px;line-height:28px;color:#2a2a2a;font-weight:normal;font-style:normal;letter-spacing:0.000px;-webkit-text-stroke:0.25px #2a2a2a;">0</div>
<div class="t" style="left:901.60px;top:75.21px;font-size:28px;line-height:28px;color:#2a2a2a;font-weight:normal;font-style:normal;letter-spacing:0.022px;-webkit-text-stroke:0.25px #2a2a2a;">12/23/2023 10:39:14</div>
<div class="t" style="left:1268.14px;top:76.71px;font-size:28px;line-height:28px;color:#2a2a2a;font-weight:normal;font-style:normal;letter-spacing:0.369px;-webkit-text-stroke:0.25px #2a2a2a;">62 ms</div>
<div class="t" style="left:1408.50px;top:76.71px;font-size:28px;line-height:28px;color:#2a2a2a;font-weight:normal;font-style:normal;letter-spacing:0.000px;-webkit-text-stroke:0.25px #2a2a2a;">104.28.76.237</div>
<div class="t" style="left:1628.00px;top:76.71px;font-size:28px;line-height:28px;color:#2a2a2a;font-weight:normal;font-style:normal;letter-spacing:0.150px;-webkit-text-stroke:0.25px #2a2a2a;">UNITED STA…</div>
<div class="t" style="left:1849.00px;top:76.71px;font-size:28px;line-height:28px;color:#2a2a2a;font-weight:normal;font-style:normal;letter-spacing:0.000px;-webkit-text-stroke:0.25px #2a2a2a;">VA</div>
<div class="t" style="left:2068.00px;top:76.71px;font-size:28px;line-height:28px;color:#2a2a2a;font-weight:normal;font-style:normal;letter-spacing:0.162px;-webkit-text-stroke:0.25px #2a2a2a;">Arcturus HQ …</div>
<div class="t" style="left:2288.75px;top:76.71px;font-size:28px;line-height:28px;color:#2a2a2a;font-weight:normal;font-style:normal;letter-spacing:0.150px;-webkit-text-stroke:0.25px #2a2a2a;">Safari 17.2</div>
<div class="t" style="left:2508.25px;top:76.71px;font-size:28px;line-height:28px;color:#2a2a2a;font-weight:normal;font-style:normal;letter-spacing:0.212px;-webkit-text-stroke:0.25px #2a2a2a;">ip-172-30-0-2…</div>
<div class="t" style="left:2773.41px;top:75.21px;font-size:28px;line-height:28px;color:#2a2a2a;font-weight:normal;font-style:normal;letter-spacing:0.393px;-webkit-text-stroke:0.25px #2a2a2a;">4 ms</div>
<div class="r" style="left:0px;top:120px;width:2880px;height:60px;background:#ffffff"></div>
<div class="t" style="left:9.00px;top:136.71px;font-size:28px;line-height:28px;color:#2a2a2a;font-weight:normal;font-style:normal;letter-spacing:0.057px;-webkit-text-stroke:0.25px #2a2a2a;">demo.arcturustech.com:7001/JPetStore/shop/vi…</div>
<svg class="r" style="left:740px;top:137px;" width="32" height="32" viewBox="0 0 32 32"><circle cx="16" cy="16" r="15.1" fill="#5cc850"/><path d="M8.5 16.5 L11.5 14 L14.5 18 L24 8.5 L25.5 10 L14.5 23.5 Z" fill="#fff"/></svg>
<div class="t" style="left:833.38px;top:136.71px;font-size:28px;line-height:28px;color:#2a2a2a;font-weight:normal;font-style:normal;letter-spacing:0.000px;-webkit-text-stroke:0.25px #2a2a2a;">0</div>
<div class="t" style="left:901.60px;top:135.21px;font-size:28px;line-height:28px;color:#2a2a2a;font-weight:normal;font-style:normal;letter-spacing:0.022px;-webkit-text-stroke:0.25px #2a2a2a;">12/23/2023 10:39:12</div>
<div class="t" style="left:1268.26px;top:136.71px;font-size:28px;line-height:28px;color:#2a2a2a;font-weight:normal;font-style:normal;letter-spacing:0.370px;-webkit-text-stroke:0.25px #2a2a2a;">39 ms</div>
<div class="t" style="left:1408.50px;top:136.71px;font-size:28px;line-height:28px;color:#2a2a2a;font-weight:normal;font-style:normal;letter-spacing:0.000px;-webkit-text-stroke:0.25px #2a2a2a;">104.28.76.237</div>
<div class="t" style="left:1628.00px;top:136.71px;font-size:28px;line-height:28px;color:#2a2a2a;font-weight:normal;font-style:normal;letter-spacing:0.150px;-webkit-text-stroke:0.25px #2a2a2a;">UNITED STA…</div>
<div class="t" style="left:1849.00px;top:136.71px;font-size:28px;line-height:28px;color:#2a2a2a;font-weight:normal;font-style:normal;letter-spacing:0.000px;-webkit-text-stroke:0.25px #2a2a2a;">VA</div>
<div class="t" style="left:2068.00px;top:136.71px;font-size:28px;line-height:28px;color:#2a2a2a;font-weight:normal;font-style:normal;letter-spacing:0.162px;-webkit-text-stroke:0.25px #2a2a2a;">Arcturus HQ …</div>
<div class="t" style="left:2288.75px;top:136.71px;font-size:28px;line-height:28px;color:#2a2a2a;font-weight:normal;font-style:normal;letter-spacing:0.150px;-webkit-text-stroke:0.25px #2a2a2a;">Safari 17.2</div>
<div class="t" style="left:2508.25px;top:136.71px;font-size:28px;line-height:28px;color:#2a2a2a;font-weight:normal;font-style:normal;letter-spacing:0.212px;-webkit-text-stroke:0.25px #2a2a2a;">ip-172-30-0-2…</div>
<div class="t" style="left:2773.04px;top:135.21px;font-size:28px;line-height:28px;color:#2a2a2a;font-weight:normal;font-style:normal;letter-spacing:0.388px;-webkit-text-stroke:0.25px #2a2a2a;">7 ms</div>
<div class="r" style="left:0px;top:180px;width:2880px;height:60px;background:#ecf4f7"></div>
<div class="t" style="left:9.00px;top:196.71px;font-size:28px;line-height:28px;color:#2a2a2a;font-weight:normal;font-style:normal;letter-spacing:0.057px;-webkit-text-stroke:0.25px #2a2a2a;">demo.arcturustech.com:7001/JPetStore/shop/vi…</div>
<svg class="r" style="left:740px;top:197px;" width="32" height="32" viewBox="0 0 32 32"><circle cx="16" cy="16" r="15.1" fill="#5cc850"/><path d="M8.5 16.5 L11.5 14 L14.5 18 L24 8.5 L25.5 10 L14.5 23.5 Z" fill="#fff"/></svg>
<div class="t" style="left:833.38px;top:196.71px;font-size:28px;line-height:28px;color:#2a2a2a;font-weight:normal;font-style:normal;letter-spacing:0.000px;-webkit-text-stroke:0.25px #2a2a2a;">0</div>
<div class="t" style="left:901.60px;top:195.21px;font-size:28px;line-height:28px;color:#2a2a2a;font-weight:normal;font-style:normal;letter-spacing:0.022px;-webkit-text-stroke:0.25px #2a2a2a;">12/23/2023 10:39:11</div>
<div class="t" style="left:1268.14px;top:196.71px;font-size:28px;line-height:28px;color:#2a2a2a;font-weight:normal;font-style:normal;letter-spacing:0.369px;-webkit-text-stroke:0.25px #2a2a2a;">78 ms</div>
<div class="t" style="left:1408.50px;top:196.71px;font-size:28px;line-height:28px;color:#2a2a2a;font-weight:normal;font-style:normal;letter-spacing:0.000px;-webkit-text-stroke:0.25px #2a2a2a;">104.28.76.237</div>
<div class="t" style="left:1628.00px;top:196.71px;font-size:28px;line-height:28px;color:#2a2a2a;font-weight:normal;font-style:normal;letter-spacing:0.150px;-webkit-text-stroke:0.25px #2a2a2a;">UNITED STA…</div>
<div class="t" style="left:1849.00px;top:196.71px;font-size:28px;line-height:28px;color:#2a2a2a;font-weight:normal;font-style:normal;letter-spacing:0.000px;-webkit-text-stroke:0.25px #2a2a2a;">VA</div>
<div class="t" style="left:2068.00px;top:196.71px;font-size:28px;line-height:28px;color:#2a2a2a;font-weight:normal;font-style:normal;letter-spacing:0.162px;-webkit-text-stroke:0.25px #2a2a2a;">Arcturus HQ …</div>
<div class="t" style="left:2288.75px;top:196.71px;font-size:28px;line-height:28px;color:#2a2a2a;font-weight:normal;font-style:normal;letter-spacing:0.150px;-webkit-text-stroke:0.25px #2a2a2a;">Safari 17.2</div>
<div class="t" style="left:2508.25px;top:196.71px;font-size:28px;line-height:28px;color:#2a2a2a;font-weight:normal;font-style:normal;letter-spacing:0.212px;-webkit-text-stroke:0.25px #2a2a2a;">ip-172-30-0-2…</div>
<div class="t" style="left:2773.16px;top:195.21px;font-size:28px;line-height:28px;color:#2a2a2a;font-weight:normal;font-style:normal;letter-spacing:0.390px;-webkit-text-stroke:0.25px #2a2a2a;">3 ms</div>
<div class="r" style="left:0px;top:240px;width:2880px;height:60px;background:#ffffff"></div>
<div class="t" style="left:9.00px;top:256.71px;font-size:28px;line-height:28px;color:#2a2a2a;font-weight:normal;font-style:normal;letter-spacing:0.057px;-webkit-text-stroke:0.25px #2a2a2a;">demo.arcturustech.com:7001/JPetStore/shop/vi…</div>
<svg class="r" style="left:740px;top:257px;" width="32" height="32" viewBox="0 0 32 32"><circle cx="16" cy="16" r="15.1" fill="#5cc850"/><path d="M8.5 16.5 L11.5 14 L14.5 18 L24 8.5 L25.5 10 L14.5 23.5 Z" fill="#fff"/></svg>
<div class="t" style="left:833.38px;top:256.71px;font-size:28px;line-height:28px;color:#2a2a2a;font-weight:normal;font-style:normal;letter-spacing:0.000px;-webkit-text-stroke:0.25px #2a2a2a;">0</div>
<div class="t" style="left:901.60px;top:255.21px;font-size:28px;line-height:28px;color:#2a2a2a;font-weight:normal;font-style:normal;letter-spacing:0.022px;-webkit-text-stroke:0.25px #2a2a2a;">12/23/2023 10:39:09</div>
<div class="t" style="left:1260.36px;top:256.71px;font-size:28px;line-height:28px;color:#2a2a2a;font-weight:normal;font-style:normal;letter-spacing:0.358px;-webkit-text-stroke:0.25px #2a2a2a;">322 ms</div>
<div class="t" style="left:1408.50px;top:256.71px;font-size:28px;line-height:28px;color:#2a2a2a;font-weight:normal;font-style:normal;letter-spacing:0.000px;-webkit-text-stroke:0.25px #2a2a2a;">104.28.76.237</div>
<div class="t" style="left:1628.00px;top:256.71px;font-size:28px;line-height:28px;color:#2a2a2a;font-weight:normal;font-style:normal;letter-spacing:0.150px;-webkit-text-stroke:0.25px #2a2a2a;">UNITED STA…</div>
<div class="t" style="left:1849.00px;top:256.71px;font-size:28px;line-height:28px;color:#2a2a2a;font-weight:normal;font-style:normal;letter-spacing:0.000px;-webkit-text-stroke:0.25px #2a2a2a;">VA</div>
<div class="t" style="left:2068.00px;top:256.71px;font-size:28px;line-height:28px;color:#2a2a2a;font-weight:normal;font-style:normal;letter-spacing:0.162px;-webkit-text-stroke:0.25px #2a2a2a;">Arcturus HQ …</div>
<div class="t" style="left:2288.75px;top:256.71px;font-size:28px;line-height:28px;color:#2a2a2a;font-weight:normal;font-style:normal;letter-spacing:0.150px;-webkit-text-stroke:0.25px #2a2a2a;">Safari 17.2</div>
<div class="t" style="left:2508.25px;top:256.71px;font-size:28px;line-height:28px;color:#2a2a2a;font-weight:normal;font-style:normal;letter-spacing:0.212px;-webkit-text-stroke:0.25px #2a2a2a;">ip-172-30-0-2…</div>
<div class="t" style="left:2773.41px;top:255.21px;font-size:28px;line-height:28px;color:#2a2a2a;font-weight:normal;font-style:normal;letter-spacing:0.393px;-webkit-text-stroke:0.25px #2a2a2a;">4 ms</div>
<div class="r" style="left:0px;top:300px;width:2880px;height:60px;background:#ecf4f7"></div>
<div class="t" style="left:9.00px;top:316.71px;font-size:28px;line-height:28px;color:#2a2a2a;font-weight:normal;font-style:normal;letter-spacing:0.058px;-webkit-text-stroke:0.25px #2a2a2a;">demo.arcturustech.com:7001/</div>
<svg class="r" style="left:740px;top:317px;" width="32" height="32" viewBox="0 0 32 32"><circle cx="16" cy="16" r="15.1" fill="#5cc850"/><path d="M8.5 16.5 L11.5 14 L14.5 18 L24 8.5 L25.5 10 L14.5 23.5 Z" fill="#fff"/></svg>
<div class="t" style="left:833.38px;top:316.71px;font-size:28px;line-height:28px;color:#2a2a2a;font-weight:normal;font-style:normal;letter-spacing:0.000px;-webkit-text-stroke:0.25px #2a2a2a;">0</div>
<div class="t" style="left:901.60px;top:315.21px;font-size:28px;line-height:28px;color:#2a2a2a;font-weight:normal;font-style:normal;letter-spacing:0.022px;-webkit-text-stroke:0.25px #2a2a2a;">12/23/2023 10:37:32</div>
<div class="t" style="left:1260.23px;top:316.71px;font-size:28px;line-height:28px;color:#2a2a2a;font-weight:normal;font-style:normal;letter-spacing:0.357px;-webkit-text-stroke:0.25px #2a2a2a;">290 ms</div>
<div class="t" style="left:1408.50px;top:316.71px;font-size:28px;line-height:28px;color:#2a2a2a;font-weight:normal;font-style:normal;letter-spacing:0.000px;-webkit-text-stroke:0.25px #2a2a2a;">104.28.76.237</div>
<div class="t" style="left:1628.00px;top:316.71px;font-size:28px;line-height:28px;color:#2a2a2a;font-weight:normal;font-style:normal;letter-spacing:0.150px;-webkit-text-stroke:0.25px #2a2a2a;">UNITED STA…</div>
<div class="t" style="left:1849.00px;top:316.71px;font-size:28px;line-height:28px;color:#2a2a2a;font-weight:normal;font-style:normal;letter-spacing:0.000px;-webkit-text-stroke:0.25px #2a2a2a;">VA</div>
<div class="t" style="left:2068.00px;top:316.71px;font-size:28px;line-height:28px;color:#2a2a2a;font-weight:normal;font-style:normal;letter-spacing:0.162px;-webkit-text-stroke:0.25px #2a2a2a;">Arcturus HQ …</div>
<div class="t" style="left:2288.75px;top:316.71px;font-size:28px;line-height:28px;color:#2a2a2a;font-weight:normal;font-style:normal;letter-spacing:0.150px;-webkit-text-stroke:0.25px #2a2a2a;">Safari 17.2</div>
<div class="t" style="left:2508.25px;top:316.71px;font-size:28px;line-height:28px;color:#2a2a2a;font-weight:normal;font-style:normal;letter-spacing:0.212px;-webkit-text-stroke:0.25px #2a2a2a;">ip-172-30-0-2…</div>
<div class="t" style="left:2772.68px;top:315.21px;font-size:28px;line-height:28px;color:#2a2a2a;font-weight:normal;font-style:normal;letter-spacing:0.383px;-webkit-text-stroke:0.25px #2a2a2a;">1 ms</div>
<div class="r" style="left:0px;top:360px;width:2880px;height:60px;background:#ffffff"></div>
<div class="t" style="left:9.00px;top:376.71px;font-size:28px;line-height:28px;color:#2a2a2a;font-weight:normal;font-style:normal;letter-spacing:0.057px;-webkit-text-stroke:0.25px #2a2a2a;">demo.arcturustech.com:7001/JPetStore/shop/vi…</div>
<svg class="r" style="left:740px;top:377px;" width="32" height="32" viewBox="0 0 32 32"><circle cx="16" cy="16" r="15.1" fill="#5cc850"/><path d="M8.5 16.5 L11.5 14 L14.5 18 L24 8.5 L25.5 10 L14.5 23.5 Z" fill="#fff"/></svg>
<div class="t" style="left:833.38px;top:376.71px;font-size:28px;line-height:28px;color:#2a2a2a;font-weight:normal;font-style:normal;letter-spacing:0.000px;-webkit-text-stroke:0.25px #2a2a2a;">0</div>
<div class="t" style="left:901.60px;top:375.21px;font-size:28px;line-height:28px;color:#2a2a2a;font-weight:normal;font-style:normal;letter-spacing:0.022px;-webkit-text-stroke:0.25px #2a2a2a;">12/23/2023 10:37:26</div>
<div class="t" style="left:1268.51px;top:376.71px;font-size:28px;line-height:28px;color:#2a2a2a;font-weight:normal;font-style:normal;letter-spacing:0.372px;-webkit-text-stroke:0.25px #2a2a2a;">49 ms</div>
<div class="t" style="left:1408.50px;top:376.71px;font-size:28px;line-height:28px;color:#2a2a2a;font-weight:normal;font-style:normal;letter-spacing:0.000px;-webkit-text-stroke:0.25px #2a2a2a;">104.28.76.237</div>
<div class="t" style="left:1628.00px;top:376.71px;font-size:28px;line-height:28px;color:#2a2a2a;font-weight:normal;font-style:normal;letter-spacing:0.150px;-webkit-text-stroke:0.25px #2a2a2a;">UNITED STA…</div>
<div class="t" style="left:1849.00px;top:376.71px;font-size:28px;line-height:28px;color:#2a2a2a;font-weight:normal;font-style:normal;letter-spacing:0.000px;-webkit-text-stroke:0.25px #2a2a2a;">VA</div>
<div class="t" style="left:2068.00px;top:376.71px;font-size:28px;line-height:28px;color:#2a2a2a;font-weight:normal;font-style:normal;letter-spacing:0.162px;-webkit-text-stroke:0.25px #2a2a2a;">Arcturus HQ …</div>
<div class="t" style="left:2288.75px;top:376.71px;font-size:28px;line-height:28px;color:#2a2a2a;font-weight:normal;font-style:normal;letter-spacing:0.150px;-webkit-text-stroke:0.25px #2a2a2a;">Safari 17.2</div>
<div class="t" style="left:2508.25px;top:376.71px;font-size:28px;line-height:28px;color:#2a2a2a;font-weight:normal;font-style:normal;letter-spacing:0.212px;-webkit-text-stroke:0.25px #2a2a2a;">ip-172-30-0-2…</div>
<div class="t" style="left:2773.16px;top:375.21px;font-size:28px;line-height:28px;color:#2a2a2a;font-weight:normal;font-style:normal;letter-spacing:0.390px;-webkit-text-stroke:0.25px #2a2a2a;">5 ms</div>
<div class="r" style="left:0px;top:420px;width:2880px;height:60px;background:#ecf4f7"></div>
<div class="t" style="left:9.00px;top:436.71px;font-size:28px;line-height:28px;color:#2a2a2a;font-weight:normal;font-style:normal;letter-spacing:0.058px;-webkit-text-stroke:0.25px #2a2a2a;">demo.arcturustech.com:7001/</div>
<svg class="r" style="left:740px;top:437px;" width="32" height="32" viewBox="0 0 32 32"><circle cx="16" cy="16" r="15.1" fill="#5cc850"/><path d="M8.5 16.5 L11.5 14 L14.5 18 L24 8.5 L25.5 10 L14.5 23.5 Z" fill="#fff"/></svg>
<div class="t" style="left:833.38px;top:436.71px;font-size:28px;line-height:28px;color:#2a2a2a;font-weight:normal;font-style:normal;letter-spacing:0.000px;-webkit-text-stroke:0.25px #2a2a2a;">0</div>
<div class="t" style="left:901.60px;top:435.21px;font-size:28px;line-height:28px;color:#2a2a2a;font-weight:normal;font-style:normal;letter-spacing:0.022px;-webkit-text-stroke:0.25px #2a2a2a;">12/23/2023 10:37:25</div>
<div class="t" style="left:1268.51px;top:436.71px;font-size:28px;line-height:28px;color:#2a2a2a;font-weight:normal;font-style:normal;letter-spacing:0.372px;-webkit-text-stroke:0.25px #2a2a2a;">41 ms</div>
<div class="t" style="left:1408.50px;top:436.71px;font-size:28px;line-height:28px;color:#2a2a2a;font-weight:normal;font-style:normal;letter-spacing:0.000px;-webkit-text-stroke:0.25px #2a2a2a;">104.28.76.237</div>
<div class="t" style="left:1628.00px;top:436.71px;font-size:28px;line-height:28px;color:#2a2a2a;font-weight:normal;font-style:normal;letter-spacing:0.150px;-webkit-text-stroke:0.25px #2a2a2a;">UNITED STA…</div>
<div class="t" style="left:1849.00px;top:436.71px;font-size:28px;line-height:28px;color:#2a2a2a;font-weight:normal;font-style:normal;letter-spacing:0.000px;-webkit-text-stroke:0.25px #2a2a2a;">VA</div>
<div class="t" style="left:2068.00px;top:436.71px;font-size:28px;line-height:28px;color:#2a2a2a;font-weight:normal;font-style:normal;letter-spacing:0.162px;-webkit-text-stroke:0.25px #2a2a2a;">Arcturus HQ …</div>
<div class="t" style="left:2288.75px;top:436.71px;font-size:28px;line-height:28px;color:#2a2a2a;font-weight:normal;font-style:normal;letter-spacing:0.150px;-webkit-text-stroke:0.25px #2a2a2a;">Safari 17.2</div>
<div class="t" style="left:2508.25px;top:436.71px;font-size:28px;line-height:28px;color:#2a2a2a;font-weight:normal;font-style:normal;letter-spacing:0.212px;-webkit-text-stroke:0.25px #2a2a2a;">ip-172-30-0-2…</div>
<div class="t" style="left:2773.16px;top:435.21px;font-size:28px;line-height:28px;color:#2a2a2a;font-weight:normal;font-style:normal;letter-spacing:0.390px;-webkit-text-stroke:0.25px #2a2a2a;">0 ms</div>
</div>
<div class="r" style="left:762px;top:474px;width:2px;height:140px;background:#96bad0"></div>
<div class="r" style="left:762px;top:620px;width:2px;height:454px;background:#a3c3d6"></div>
<div class="r" style="left:832px;top:474px;width:2px;height:140px;background:#96bad0"></div>
<div class="r" style="left:832px;top:620px;width:2px;height:454px;background:#a3c3d6"></div>
<div class="r" style="left:902px;top:474px;width:2px;height:140px;background:#96bad0"></div>
<div class="r" style="left:902px;top:620px;width:2px;height:454px;background:#a3c3d6"></div>
<div class="r" style="left:1002px;top:474px;width:2px;height:140px;background:#96bad0"></div>
<div class="r" style="left:1002px;top:620px;width:2px;height:454px;background:#a3c3d6"></div>
<div class="r" style="left:1328px;top:474px;width:2px;height:140px;background:#96bad0"></div>
<div class="r" style="left:1328px;top:620px;width:2px;height:454px;background:#a3c3d6"></div>
<div class="r" style="left:1508px;top:474px;width:2px;height:140px;background:#96bad0"></div>
<div class="r" style="left:1508px;top:620px;width:2px;height:454px;background:#a3c3d6"></div>
<div class="r" style="left:1728px;top:474px;width:2px;height:140px;background:#96bad0"></div>
<div class="r" style="left:1728px;top:620px;width:2px;height:454px;background:#a3c3d6"></div>
<div class="r" style="left:1948px;top:474px;width:2px;height:140px;background:#96bad0"></div>
<div class="r" style="left:1948px;top:620px;width:2px;height:454px;background:#a3c3d6"></div>
<div class="r" style="left:2168px;top:474px;width:2px;height:140px;background:#96bad0"></div>
<div class="r" style="left:2168px;top:620px;width:2px;height:454px;background:#a3c3d6"></div>
<div class="r" style="left:2388px;top:474px;width:2px;height:140px;background:#96bad0"></div>
<div class="r" style="left:2388px;top:620px;width:2px;height:454px;background:#a3c3d6"></div>
<div class="r" style="left:2608px;top:474px;width:2px;height:140px;background:#96bad0"></div>
<div class="r" style="left:2608px;top:620px;width:2px;height:454px;background:#a3c3d6"></div>
<div class="r" style="left:2828px;top:474px;width:2px;height:140px;background:#96bad0"></div>
<div class="r" style="left:2828px;top:620px;width:2px;height:454px;background:#a3c3d6"></div>
<svg class="r" style="left:1536px;top:1083px;" width="32" height="12" viewBox="0 0 32 12"><rect x="0" y="1" width="32" height="2.5" fill="#a8a8a8"/><rect x="0" y="5" width="32" height="2.5" fill="#a8a8a8"/><rect x="0" y="9" width="32" height="2.5" fill="#a8a8a8"/></svg>
<div class="r" style="left:495px;top:1116px;width:282px;height:61px;background:#fff;border-radius:12px"></div>
<div class="t" style="left:160.25px;top:1133.83px;font-size:27px;line-height:27px;color:#4a5578;font-weight:bold;font-style:normal;letter-spacing:0.000px;-webkit-text-stroke:0.3px #4a5578;transform:scaleX(0.9688);transform-origin:1.75px 0;">Page Load Performance</div>
<div class="t" style="left:529.35px;top:1133.83px;font-size:27px;line-height:27px;color:#5b9cf0;font-weight:bold;font-style:normal;letter-spacing:0.000px;-webkit-text-stroke:0.3px #5b9cf0;transform:scaleX(0.9677);transform-origin:0.25px 0;">Time Distribution</div>
<div class="t" style="left:811.50px;top:1133.83px;font-size:27px;line-height:27px;color:#4a5578;font-weight:bold;font-style:normal;letter-spacing:0.000px;-webkit-text-stroke:0.3px #4a5578;transform:scaleX(0.9752);transform-origin:1.50px 0;">User Path</div>
<div class="t" style="left:1001.50px;top:1133.83px;font-size:27px;line-height:27px;color:#4a5578;font-weight:bold;font-style:normal;letter-spacing:0.000px;-webkit-text-stroke:0.3px #4a5578;transform:scaleX(0.9665);transform-origin:0.50px 0;">JS Errors/Timeout</div>
<div class="r" style="left:112px;top:1198px;width:2880px;height:450px;background:#fff;border-radius:10px 10px 0 0;box-shadow:0 0 0 1.5px #eeeeee"></div>
<svg class="r" style="left:979px;top:1376px;" width="88" height="88" viewBox="0 0 88 88"><defs><clipPath id="cc"><circle cx="44.2" cy="43.7" r="40.5"/></clipPath></defs><circle cx="44.2" cy="43.7" r="40.5" fill="#64a1db"/><g clip-path="url(#cc)"><path d="M44.20 26.70 L94.20 26.70" stroke="#fff" stroke-width="4.6"/><path d="M58.92 52.20 L33.92 95.50" stroke="#fff" stroke-width="4.6"/><path d="M29.48 52.20 L4.48 8.90" stroke="#fff" stroke-width="4.6"/></g><circle cx="44.2" cy="43.7" r="19.2" fill="#fff"/><circle cx="44.2" cy="43.7" r="15.1" fill="#64a1db"/></svg>
<svg class="r" style="left:1262px;top:1376px;" width="88" height="88" viewBox="0 0 88 88">
<path d="M8.5 24.2 L23 26 L26 31.4 L27.2 38.7 L31.4 44.7 L39.3 49 L46 52.6 L48.4 55.6 L46.5 60.4 L49.6 69.5 L49.6 75.5 L48.6 84.5 A 40.5 40.5 0 0 1 8.5 24.2 Z" fill="#64a1db"/>
<path d="M68.3 24.2 L71.3 22.4 L78.8 21.9 A 40.5 40.5 0 0 1 54.5 83.3 L60.4 75.5 L64 69.5 L68.3 66.5 L72.5 61 L71.3 59.2 L65.3 55 L60.4 51.4 L49.6 49.6 L47.1 47.7 L40.5 44.7 L41.1 42.3 L47.1 42.3 L51.4 37.5 L57.4 33.2 L64 30.8 L68.3 26.6 Z" fill="#64a1db"/>
<path d="M13.9 17.5 A 40.5 40.5 0 0 1 60.4 6.5 L52 10.9 L39.3 13 L30.2 14.5 L15.1 17.8 Z" fill="#64a1db"/>
<rect x="32" y="8" width="6" height="3" rx="1" fill="#fff"/><rect x="45" y="6.8" width="5" height="2.6" rx="1" fill="#fff"/>
<path d="M53.2 12.1 L56.8 12.5 L60.4 18.1 L64 23 L68.3 24.2 L68.3 26.6 L64.5 27 L60 22 L56 17 Z" fill="#64a1db"/>
<ellipse cx="48" cy="20" rx="3.6" ry="2.2" transform="rotate(-45 48 20)" fill="#64a1db"/>
</svg>
<svg class="r" style="left:1640px;top:1376px;" width="90" height="90" viewBox="0 0 90 90"><rect x="4.6" y="3.7" width="80.7" height="25.7" rx="6" fill="#64a1db"/><circle cx="18.5" cy="16.55" r="6.2" fill="#fff"/><path d="M49 14.350000000000001 L75 14.350000000000001 M51 18.75 L77 18.75" stroke="#fff" stroke-width="2" stroke-dasharray="2 3" opacity="0.85"/><rect x="4.6" y="32.5" width="80.7" height="22.8" rx="6" fill="#64a1db"/><circle cx="18.5" cy="43.9" r="6.2" fill="#fff"/><path d="M49 41.699999999999996 L75 41.699999999999996 M51 46.1 L77 46.1" stroke="#fff" stroke-width="2" stroke-dasharray="2 3" opacity="0.85"/><rect x="4.6" y="58.4" width="80.7" height="25.6" rx="6" fill="#64a1db"/><circle cx="18.5" cy="71.2" r="6.2" fill="#fff"/><path d="M49 69.0 L75 69.0 M51 73.4 L77 73.4" stroke="#fff" stroke-width="2" stroke-dasharray="2 3" opacity="0.85"/></svg>
<svg class="r" style="left:2026px;top:1376px;" width="88" height="88" viewBox="0 0 88 88"><ellipse cx="43.4" cy="14.8" rx="35.5" ry="11.2" fill="#64a1db"/>
<path d="M7.9 24.2 Q 43.4 38.6 78.9 24.2 L78.9 36.9 Q 43.4 53.1 7.9 36.9 Z" fill="#64a1db"/>
<path d="M7.9 42.3 Q 43.4 58.1 78.9 42.3 L78.9 55 Q 43.4 70.8 7.9 55 Z" fill="#64a1db"/>
<path d="M7.9 60.4 Q 43.4 76.2 78.9 60.4 L78.9 70.1 Q 78.9 84.3 43.4 84.3 Q 7.9 84.3 7.9 70.1 Z" fill="#64a1db"/></svg>
<svg class="r" style="left:1091px;top:1411px;" width="148" height="18" viewBox="0 0 148 18"><path d="M0 9 L134 9" stroke="#5b6d36" stroke-width="2.2"/><path d="M131 1 L148 9 L131 17 Z" fill="#5b6d36"/></svg>
<svg class="r" style="left:1374px;top:1411px;" width="244" height="18" viewBox="0 0 244 18"><path d="M0 9 L230 9" stroke="#5b6d36" stroke-width="2.2"/><path d="M227 1 L244 9 L227 17 Z" fill="#5b6d36"/></svg>
<svg class="r" style="left:1753px;top:1411px;" width="249" height="18" viewBox="0 0 249 18"><path d="M0 9 L235 9" stroke="#5b6d36" stroke-width="2.2"/><path d="M232 1 L249 9 L232 17 Z" fill="#5b6d36"/></svg>
<div class="t" style="left:978.25px;top:1473.90px;font-size:23px;line-height:23px;color:#111;font-weight:normal;font-style:normal;letter-spacing:0.733px;-webkit-text-stroke:0.2px #111;">Browser</div>
<div class="t" style="left:996.00px;top:1498.90px;font-size:23px;line-height:23px;color:#111;font-weight:normal;font-style:normal;letter-spacing:1.417px;-webkit-text-stroke:0.2px #111;">9 ms</div>
<div class="t" style="left:1259.95px;top:1473.90px;font-size:23px;line-height:23px;color:#111;font-weight:normal;font-style:normal;letter-spacing:1.108px;-webkit-text-stroke:0.2px #111;">Network</div>
<div class="t" style="left:1194.25px;top:1498.90px;font-size:23px;line-height:23px;color:#111;font-weight:normal;font-style:normal;letter-spacing:0.519px;-webkit-text-stroke:0.2px #111;">30 ms 102 μs 160 ns</div>
<div class="t" style="left:1520.50px;top:1473.90px;font-size:23px;line-height:23px;color:#111;font-weight:normal;font-style:normal;letter-spacing:0.715px;-webkit-text-stroke:0.2px #111;">ip-172-30-0-208_JPetStore_tc</div>
<div class="t" style="left:1586.00px;top:1498.90px;font-size:23px;line-height:23px;color:#111;font-weight:normal;font-style:normal;letter-spacing:0.506px;-webkit-text-stroke:0.2px #111;">8 ms 68 μs 234 ns</div>
<div class="t" style="left:2017.25px;top:1473.90px;font-size:23px;line-height:23px;color:#111;font-weight:normal;font-style:normal;letter-spacing:0.643px;-webkit-text-stroke:0.2px #111;">Database</div>
<div class="t" style="left:1950.85px;top:1498.90px;font-size:23px;line-height:23px;color:#111;font-weight:normal;font-style:normal;letter-spacing:0.495px;-webkit-text-stroke:0.2px #111;">191 ms 829 μs 606 ns</div>
<div class="t" style="left:131.50px;top:1678.94px;font-size:26px;line-height:26px;color:#333;font-weight:normal;font-style:normal;letter-spacing:0.000px;-webkit-text-stroke:0.25px #333;">Arcturus Applicare 9.2.7</div>
<div class="t" style="left:2189.75px;top:1678.94px;font-size:26px;line-height:26px;color:#333;font-weight:normal;font-style:normal;letter-spacing:0.030px;-webkit-text-stroke:0.25px #333;">Copyright © 2023</div>
<div class="t" style="left:2408.50px;top:1678.94px;font-size:26px;line-height:26px;color:#5bbfd0;font-weight:normal;font-style:normal;letter-spacing:0.029px;-webkit-text-stroke:0.2px #5bbfd0;">Arcturus Technologies, Inc.</div>
<div class="t" style="left:2732.25px;top:1678.94px;font-size:26px;line-height:26px;color:#333;font-weight:normal;font-style:normal;letter-spacing:0.000px;-webkit-text-stroke:0.25px #333;">I</div>
<div class="t" style="left:2757.00px;top:1678.94px;font-size:26px;line-height:26px;color:#333;font-weight:normal;font-style:normal;letter-spacing:0.000px;-webkit-text-stroke:0.25px #333;transform:scaleX(0.9989);transform-origin:0.00px 0;">All Rights Reserved</div>
<div class="r" style="left:6px;top:1678px;width:196px;height:40px;border-radius:8px;background:linear-gradient(90deg,#c3c3c1,#e4e4e4);box-shadow:0 0 0 1px rgba(0,0,0,0.12)"></div>
<div class="t" style="left:17.00px;top:1686.18px;font-size:24px;line-height:24px;color:#3a3a3a;font-weight:normal;font-style:normal;letter-spacing:0.615px;-webkit-text-stroke:0.2px #3a3a3a;">Display a menu</div>
<svg class="r" style="left:0px;top:1700px;" width="20" height="20" viewBox="0 0 20 20"><path d="M0 0 L0 20 L20 20 C 8 20, 0 12, 0 0 Z" fill="#3b3622"/></svg>
<svg class="r" style="left:3004px;top:1700px;" width="20" height="20" viewBox="0 0 20 20"><path d="M20 0 L20 20 L0 20 C 12 20, 20 12, 20 0 Z" fill="#3b3622"/></svg>
</body></html>
